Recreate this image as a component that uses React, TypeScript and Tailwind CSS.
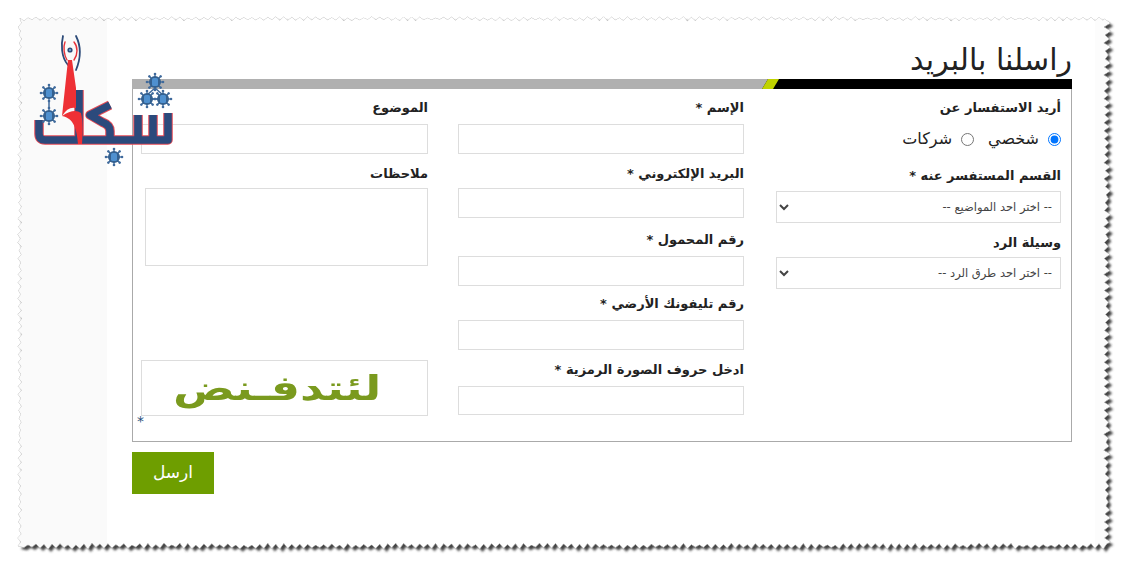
import React from 'react';

// seeded jitter so the torn paper edge is the same on every load
function tornEdge() {
  let seed = 7;
  const rnd = () => {
    seed = (seed * 16807) % 2147483647;
    return seed / 2147483647;
  };
  const pts: string[] = [];
  const L = 20, T = 19, R = 1107, B = 546;
  const walk = (x0: number, y0: number, x1: number, y1: number, amp: number) => {
    const len = Math.hypot(x1 - x0, y1 - y0);
    const n = Math.round(len / 4);
    for (let i = 0; i < n; i++) {
      const t = i / n;
      const off = (i % 2 === 0 ? -1 : 1) * (0.3 + rnd() * 0.7) * amp;
      const nx = x0 === x1 ? off : 0;
      const ny = y0 === y1 ? off : 0;
      pts.push(`${(x0 + (x1 - x0) * t + nx).toFixed(1)},${(y0 + (y1 - y0) * t + ny).toFixed(1)}`);
    }
  };
  walk(L, T, R, T, 2.2);
  walk(R, T, R, B, 3.5);
  walk(R, B, L, B, 3);
  walk(L, B, L, T, 2.2);
  return 'M' + pts.join('L') + 'Z';
}

const edge = tornEdge();

const PaperEdge = () => (
  <svg className="absolute inset-0 z-20 pointer-events-none" width="1126" height="567">
    <defs>
      <filter id="soft" x="-5%" y="-5%" width="110%" height="110%">
        <feGaussianBlur stdDeviation="1.3" />
      </filter>
      <clipPath id="outside">
        <path clipRule="evenodd" d={`M0 0H1126V567H0Z ${edge}`} />
      </clipPath>
    </defs>
    <path fillRule="evenodd" fill="#fff" d={`M0 0H1126V567H0Z ${edge}`} />
    <g clipPath="url(#outside)">
      <path d={edge} fill="#444" filter="url(#soft)" transform="translate(3 3)" />
      <path d={edge} fill="none" stroke="#c4c4c4" strokeWidth="1" />
    </g>
  </svg>
);

const Virus = ({ x, y }: { x: number; y: number }) => (
  <g transform={`translate(${x} ${y})`}>
    {[0, 45, 90, 135, 180, 225, 270, 315].map((a) => (
      <g key={a} transform={`rotate(${a})`}>
        <line x1="0" y1="-5" x2="0" y2="-7.5" stroke="#3f6a9c" strokeWidth="1.3" />
        <circle cx="0" cy="-8" r="1.3" fill="#3f6a9c" />
      </g>
    ))}
    <circle r="6" fill="#34608f" />
    <rect x="-3" y="-4" width="6" height="8" rx="1.5" fill="#4f90cf" />
  </g>
);

const wordmark =
  'M39 120V134Q39 140 45 140H168V113M153 140V115M138 140V115M79 140V90M88 140H110V131Q110 125 102 122L90 115L110 105';

const Logo = () => (
  <svg className="absolute left-0 top-0 z-10 pointer-events-none" width="190" height="180">
    <g fill="none" strokeLinecap="round">
      <path d="M63 36C61 44 61 57 68 65M76 36C81 46 81 58 76 70" stroke="#2c4a78" strokeWidth="1.8" />
      <path d="M65 42C63 47 64 55 67 60M74 42C78 47 78 54 74 60" stroke="#e8333a" strokeWidth="1.4" />
    </g>
    <circle cx="70" cy="50" r="2.600" fill="#2c4a78" />
    <circle cx="70" cy="50" r="1" fill="#7fb0e0" />
    <g fill="none" strokeLinejoin="round">
      <path d={wordmark} stroke="#e24a55" strokeWidth="9.500" />
      <path d={wordmark} stroke="#2b4a7c" strokeWidth="7.500" />
    </g>
    <path d="M68 60H72L76 88V108Q68 106 62 116Z" fill="#ee3035" />
    <path d="M62 116Q74 108 81 113C83 122 83 132 82 144H78C77 130 74 118 62 116Z" fill="#ee3035" />
    <path d="M155 88L147 95M155 88L163 95M150 99H160M49 100V108" stroke="#3f6a9c" strokeWidth="1.5" />
    <Virus x={49} y={93} />
    <Virus x={49} y={116} />
    <Virus x={155} y={82} />
    <Virus x={147} y={99} />
    <Virus x={163} y={99} />
    <Virus x={114} y={157} />
  </svg>
);

const labelCls = 'block font-bold text-[13px] leading-[18px] text-[#222]';
const boxCls = 'block w-full border border-[#ddd] bg-white';

const Field = ({ label, top, gap, h = 'h-[30px]' }: { label: string; top: string; gap: string; h?: string }) => (
  <div className={top}>
    <label className={labelCls}>{label}</label>
    <input type="text" className={`${boxCls} ${h} ${gap}`} />
  </div>
);

export default function App() {
  return (
    <div className="relative w-[1126px] h-[567px] overflow-hidden bg-white font-['DejaVu_Sans',sans-serif]">
      <Logo />
      <PaperEdge />
      <div className="flex h-full p-[18px]">
        <aside className="w-[89px] bg-[#fafafa]" />
        <main className="flex-1 pl-[25px]">
          <div className="w-[940px]">
            <h1 dir="rtl" className="h-[61px] pt-[22px] text-[30px] leading-[40px] text-[#222]">راسلنا بالبريد</h1>
            <div className="flex h-[10px] bg-black">
              <div className="w-[636px] bg-[#b0b0b0] [clip-path:polygon(0_0,100%_0,calc(100%-6px)_100%,0_100%)]" />
              <div className="ml-[-6px] w-[17px] bg-[#bfd200] [clip-path:polygon(6px_0,100%_0,calc(100%-6px)_100%,0_100%)]" />
            </div>
            <div
              dir="rtl"
              className="flex h-[353px] gap-x-[32px] border border-t-0 border-[#aaa] pr-[10px] pl-[8px] pt-[10px] relative"
            >
              <div className="w-[285px]">
                <label className={labelCls}>أريد الاستفسار عن</label>
                <div className="mt-[12px] flex h-[20px] items-center text-[16px] text-[#222]">
                  <input type="radio" name="kind" defaultChecked className="m-0 h-[13px] w-[13px]" />
                  <span className="mr-[9px]">شخصي</span>
                  <input type="radio" name="kind" className="m-0 mr-[14px] h-[13px] w-[13px]" />
                  <span className="mr-[9px]">شركات</span>
                </div>
                <div className="mt-[18px]">
                  <label className={labelCls}>القسم المستفسر عنه *</label>
                  <select className={`${boxCls} mt-[6px] h-[32px] px-1 text-[11.5px] text-[#444]`}>
                    <option>-- اختر احد المواضيع --</option>
                  </select>
                </div>
                <div className="mt-[11px]">
                  <label className={labelCls}>وسيلة الرد</label>
                  <select className={`${boxCls} mt-[5px] h-[32px] px-1 text-[11.5px] text-[#444]`}>
                    <option>-- اختر احد طرق الرد --</option>
                  </select>
                </div>
              </div>
              <div className="w-[286px] ml-[-2px]">
                <Field label="الإسم *" top="" gap="mt-[7px]" />
                <Field label="البريد الإلكتروني *" top="mt-[11px]" gap="mt-[5px]" />
                <Field label="رقم المحمول *" top="mt-[13px]" gap="mt-[7px]" />
                <Field label="رقم تليفونك الأرضي *" top="mt-[9px]" gap="mt-[7px]" />
                <Field label="ادخل حروف الصورة الرمزية *" top="mt-[11px]" gap="mt-[7px]" h="h-[29px]" />
              </div>
              <div className="w-[287px]">
                <Field label="الموضوع" top="" gap="mt-[7px]" />
                <div className="mt-[11px]">
                  <label className={labelCls}>ملاحظات</label>
                  <textarea className="mt-[5px] block h-[78px] w-[283px] resize-none border border-[#ddd] bg-white" />
                </div>
                <div className="mt-[94px] flex h-[56px] w-[287px] items-center justify-center overflow-hidden border border-[#ddd] pr-[14px]">
                  <span className="text-[34px] font-bold leading-[40px] text-[#7a9a1e] [transform:scaleX(1.35)]">لئتدفـنض</span>
                </div>
                <div className="text-left text-[14px] leading-[8px] mt-[1px] ml-[-4px] text-[#1f4e79]">*</div>
              </div>
            </div>
            <button dir="rtl" className="mt-[10px] h-[42px] w-[82px] bg-[#6e9e00] text-[17px] text-white">ارسل</button>
          </div>
        </main>
        <div className="ml-[-13px] w-[13px] bg-[#fcfcfc]" />
      </div>
    </div>
  );
}
